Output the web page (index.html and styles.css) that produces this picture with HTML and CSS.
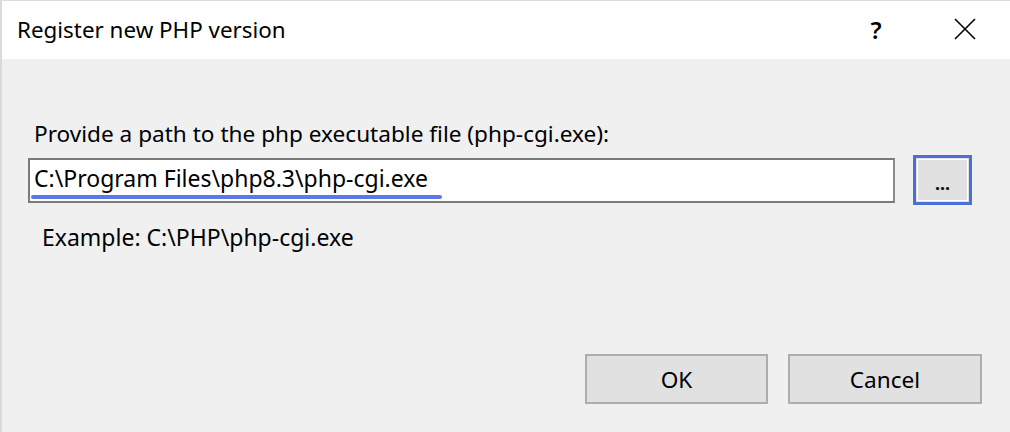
FILE: index.html
```html
<!DOCTYPE html>
<html>
<head>
<meta charset="utf-8">
<link rel="stylesheet" href="styles.css">
</head>
<body>
<div class="dialog">
  <div class="titlebar">
    <div class="title">Register new PHP version</div>
    <div class="title-actions">
      <span class="help">?</span>
      <span class="close">
        <svg width="22" height="22" viewBox="0 0 22 22"><path d="M1 1 L21 21 M21 1 L1 21" stroke="#000" stroke-width="1.6" fill="none"/></svg>
      </span>
    </div>
  </div>
  <div class="content">
    <div class="label">Provide a path to the php executable file (php-cgi.exe):</div>
    <div class="path-row">
      <div class="input">
        <span class="input-text">C:\Program Files\php8.3\php-cgi.exe</span>
        <span class="underline"></span>
      </div>
      <button class="browse">...</button>
    </div>
    <div class="example">Example: C:\PHP\php-cgi.exe</div>
    <div class="footer">
      <button class="btn ok">OK</button>
      <button class="btn cancel">Cancel</button>
    </div>
  </div>
</div>
</body>
</html>
```

FILE: styles.css
```css
html, body {
  margin: 0;
  padding: 0;
  background: #f0f0f0;
}
body {
  width: 1010px;
  height: 432px;
  overflow: hidden;
  font-family: "Noto Sans", "Open Sans", sans-serif;
  color: #000;
}
.dialog {
  border-top: 1px solid #dcdcdc;
  border-left: 2px solid #dadada;
  box-sizing: border-box;
  height: 432px;
}
.titlebar {
  height: 58px;
  background: #fff;
  display: flex;
  align-items: center;
  padding-left: 15px;
}
.title {
  font-size: 22.4px;
  flex: 1;
  margin-top: -1px;
}
.title-actions {
  display: flex;
  align-items: center;
}
.help {
  font-size: 24px;
  font-weight: 600;
  width: 20px;
  text-align: center;
  margin-right: 68px;
  margin-top: -2px;
}
.close {
  display: block;
  width: 22px;
  height: 22px;
  margin-right: 34px;
  margin-top: -2px;
}
.close svg { display: block; }
.content {
  padding: 61px 0 0 26px;
}
.label {
  font-size: 22.6px;
  line-height: 28px;
  padding-left: 6px;
}
.path-row {
  display: flex;
  align-items: center;
  margin-top: 7px;
}
.input {
  position: relative;
  width: 867px;
  height: 45px;
  box-sizing: border-box;
  border: 2px solid #7a7a7a;
  border-right-color: #8a8a8a;
  background: #fff;
  display: flex;
  align-items: center;
  padding-left: 4px;
}
.input-text {
  font-size: 23px;
  margin-top: -4px;
}
.underline {
  position: absolute;
  left: 1px;
  bottom: 2px;
  width: 411px;
  height: 4px;
  border-radius: 2px;
  background: #5a78ea;
}
.browse {
  margin-left: 18px;
  width: 59px;
  height: 50px;
  box-sizing: border-box;
  border: 3px solid #4a6fd6;
  outline: 1px solid #fff;
  outline-offset: -5px;
  background: #e1e1e1;
  font-family: "Noto Sans", sans-serif;
  font-size: 18px;
  font-weight: bold;
  padding: 6px 0 0;
  color: #111;
  line-height: 1;
}
.example {
  font-size: 23px;
  line-height: 28px;
  padding-left: 14px;
  margin-top: 18px;
}
.footer {
  display: flex;
  margin-top: 103px;
  padding-left: 557px;
  gap: 20px;
}
.btn {
  height: 50px;
  box-sizing: border-box;
  border: 2px solid #adadad;
  background: #e1e1e1;
  font-family: "Noto Sans", sans-serif;
  font-size: 22.6px;
  color: #000;
  padding: 0;
}
.ok { width: 183px; }
.cancel { width: 194px; }
```
